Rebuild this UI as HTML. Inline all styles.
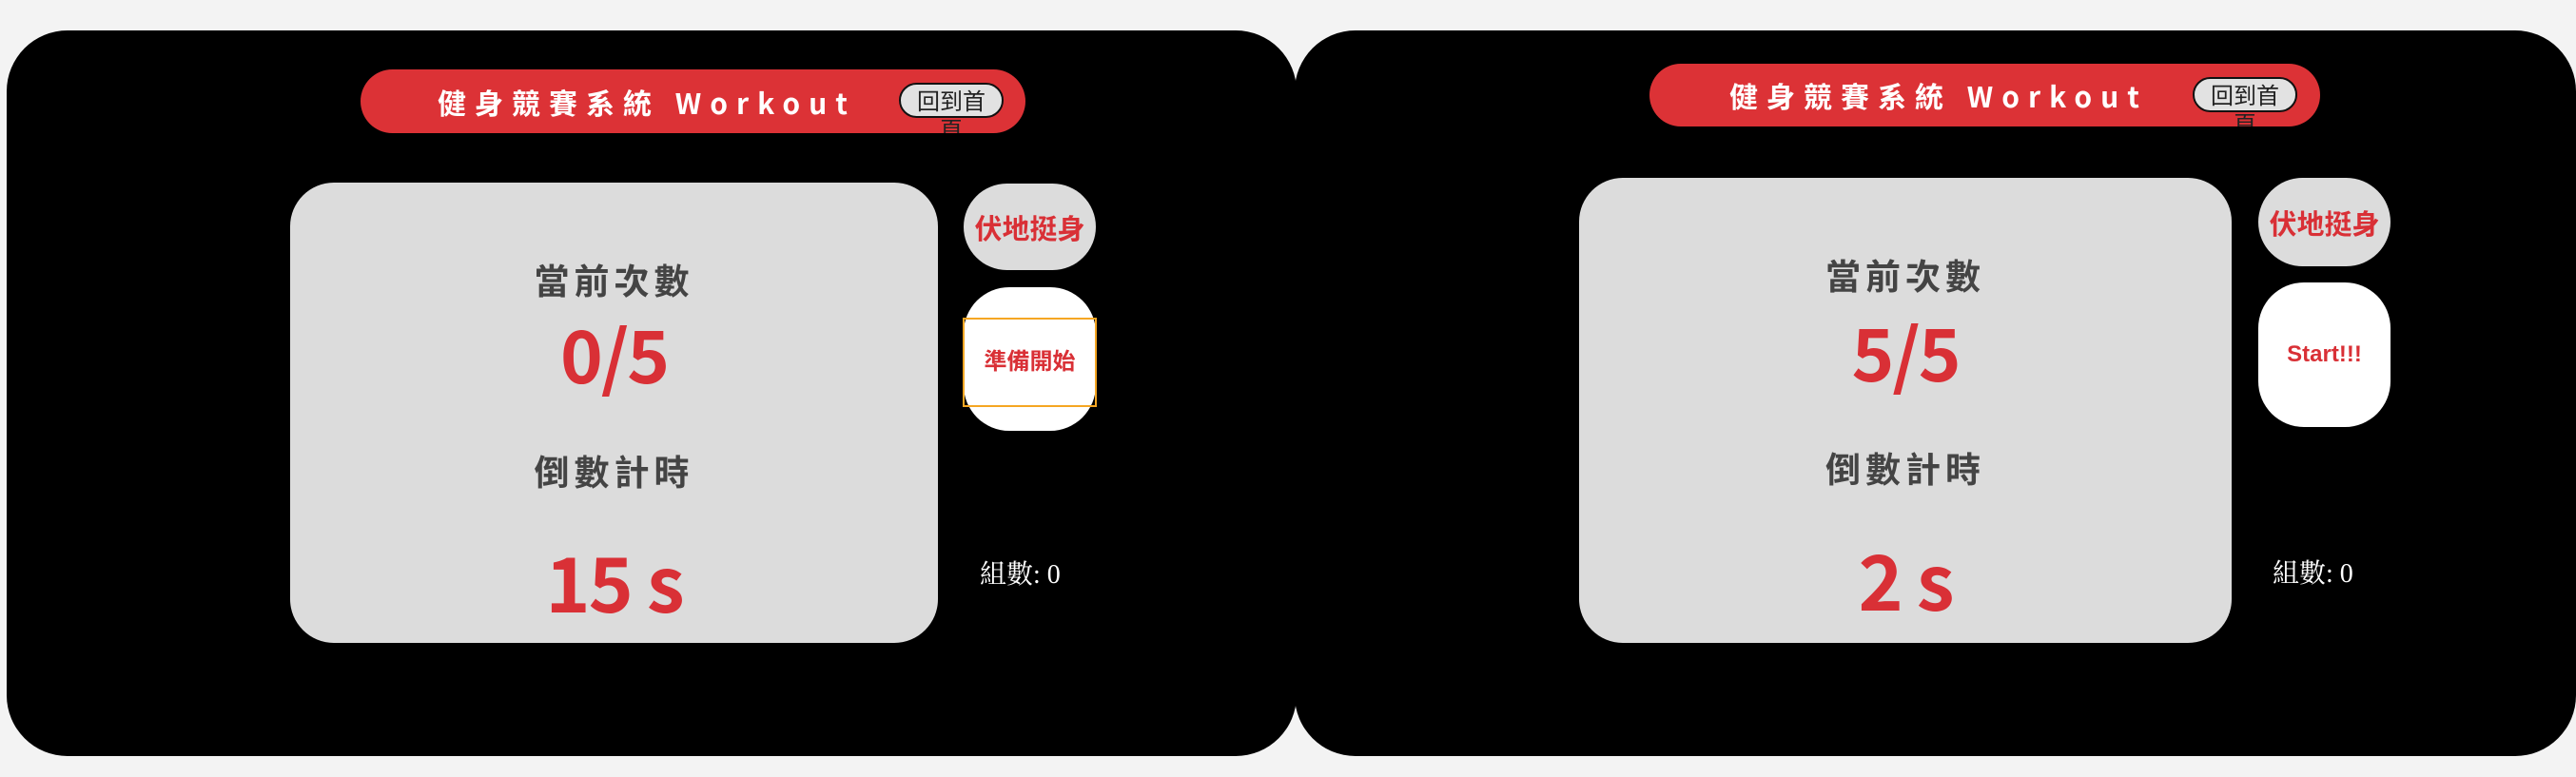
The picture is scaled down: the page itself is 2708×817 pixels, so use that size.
<!DOCTYPE html>
<html><head><meta charset="utf-8"><style>
*{margin:0;padding:0;box-sizing:border-box}
body{width:2708px;height:817px;background:#f3f3f3;position:relative;overflow:hidden;font-family:"Liberation Sans","Noto Sans CJK TC",sans-serif}
.abs{position:absolute}
.panel{background:#000;border-radius:64px}
.hdr{background:#dc3236;border-radius:34px;overflow:hidden}
.title{position:absolute;color:#fff;font-weight:700;font-size:30px;letter-spacing:9px;white-space:nowrap;font-family:"Noto Sans CJK TC",sans-serif}
.home{position:absolute;background:#e2e2e2;border:2px solid #111;border-radius:19px;width:110px;height:37px;font-size:24px;color:#222;line-height:30px;text-align:center;padding:1px 8px 0 8px;font-family:"Noto Sans CJK TC",sans-serif;word-break:break-all}
.card{background:#dcdcdc;border-radius:46px}
.lbl{position:absolute;left:0;width:100%;text-align:center;color:#444;font-weight:700;font-size:37px;letter-spacing:5px;font-family:"Noto Sans CJK TC",sans-serif;line-height:1}
.big{position:absolute;left:0;width:100%;text-align:center;color:#d93036;font-weight:700;font-family:"Noto Sans CJK TC",sans-serif;line-height:1;letter-spacing:-2px}
.btn{border-radius:48px;display:flex;align-items:center;justify-content:center;color:#d93036;font-weight:700;font-family:"Noto Sans CJK TC",sans-serif}
.sets{color:#fff;font-family:"Liberation Serif","Noto Serif CJK SC",serif;font-size:28px;white-space:nowrap}
</style></head><body>
<div class="abs panel" style="left:7px;top:32px;width:1356px;height:763px"></div>
<div class="abs hdr" style="left:379px;top:73px;width:699px;height:67px">
  <div class="title" style="left:81px;top:12px">健身競賽系統 Workout</div>
  <div class="home" style="left:566px;top:14px">回到首頁</div>
</div>
<div class="abs card" style="left:305px;top:192px;width:681px;height:484px">
  <div class="lbl" style="top:83px">當前次數</div>
  <div class="big" style="top:140px;font-size:76px">0/5</div>
  <div class="lbl" style="top:284px">倒數計時</div>
  <div class="big" style="top:378px;font-size:80px">15 s</div>
</div>
<div class="abs btn" style="left:1013px;top:193px;width:139px;height:91px;background:#dcdcdc;font-size:29px">伏地挺身</div>
<div class="abs btn" style="left:1013px;top:302px;width:139px;height:151px;background:#fff;font-size:24px">準備開始</div>
<div class="abs" style="left:1012px;top:334px;width:141px;height:94px;border:2px solid #f5a623"></div>
<div class="abs sets" style="left:1030px;top:582px">組數: 0</div>

<div class="abs panel" style="left:1361px;top:32px;width:1347px;height:763px"></div>
<div class="abs hdr" style="left:1734px;top:67px;width:705px;height:66px">
  <div class="title" style="left:84px;top:11px">健身競賽系統 Workout</div>
  <div class="home" style="left:571px;top:14px">回到首頁</div>
</div>
<div class="abs card" style="left:1660px;top:187px;width:686px;height:489px">
  <div class="lbl" style="top:83px">當前次數</div>
  <div class="big" style="top:143px;font-size:76px">5/5</div>
  <div class="lbl" style="top:286px">倒數計時</div>
  <div class="big" style="top:381px;font-size:80px">2 s</div>
</div>
<div class="abs btn" style="left:2374px;top:187px;width:139px;height:93px;background:#dcdcdc;font-size:29px">伏地挺身</div>
<div class="abs btn" style="left:2374px;top:297px;width:139px;height:152px;background:#fff;font-size:24px;font-family:'Liberation Sans',sans-serif">Start!!!</div>
<div class="abs sets" style="left:2389px;top:581px">組數: 0</div>
</body></html>
